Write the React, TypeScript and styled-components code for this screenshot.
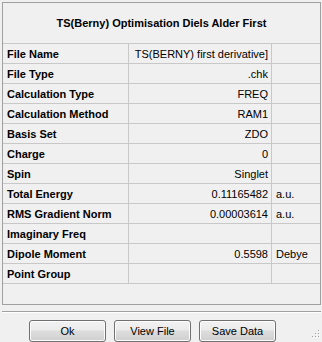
import React from "react";
import styled, { createGlobalStyle } from "styled-components";

const Global = createGlobalStyle`
  html, body { margin: 0; padding: 0; background: #f0f0f0; }
  body { font-family: "Liberation Sans", Arial, sans-serif; font-size: 11px; color: #000; }
`;

const Window = styled.div`
  width: 322px;
  height: 342px;
  box-sizing: border-box;
  padding: 2px 1px 0 2px;
  display: flex;
  flex-direction: column;
  position: relative;
`;

const Panel = styled.div`
  height: 303px;
  box-sizing: border-box;
  border: 1px solid #a0a0a0;
  display: flex;
  flex-direction: column;
`;

const Title = styled.div`
  height: 40px;
  display: flex;
  align-items: center;
  justify-content: center;
  font-weight: bold;
  font-size: 11px;
  border-bottom: 1px solid #c8c8c8;
`;

const Grid = styled.div`
  display: grid;
  grid-template-columns: 126px 143px 1fr;
`;

const Cell = styled.div<{ $align?: "left" | "right"; $bold?: boolean; $last?: boolean }>`
  height: 19px;
  border-bottom: 1px solid #c8c8c8;
  border-right: ${(p) => (p.$last ? "none" : "1px solid #c8c8c8")};
  display: flex;
  align-items: center;
  justify-content: ${(p) => (p.$align === "right" ? "flex-end" : "flex-start")};
  padding: ${(p) => (p.$align === "right" ? "0 3px 0 0" : "0 0 0 4px")};
  font-weight: ${(p) => (p.$bold ? "bold" : "normal")};
  white-space: nowrap;
  overflow: hidden;
`;

const Separator = styled.div`
  margin-top: 6px;
  height: 1px;
  background: #a0a0a0;
  border-bottom: 1px solid #ffffff;
`;

const ButtonRow = styled.div`
  display: flex;
  gap: 8px;
  padding: 7px 0 0 27px;
`;

const Button = styled.button`
  width: 77px;
  height: 22px;
  box-sizing: border-box;
  border: 1px solid #707070;
  border-radius: 3px;
  background: linear-gradient(#f2f2f2 0%, #ebebeb 45%, #dddddd 50%, #cfcfcf 100%);
  box-shadow: inset 0 0 0 1px #fcfcfc;
  font-family: "Liberation Sans", Arial, sans-serif;
  font-size: 11px;
  color: #000;
  padding: 0;
`;

const Grip = styled.svg`
  position: absolute;
  right: 2px;
  bottom: 2px;
`;

const rows: [string, string, string][] = [
  ["File Name", "TS(BERNY) first derivative]", ""],
  ["File Type", ".chk", ""],
  ["Calculation Type", "FREQ", ""],
  ["Calculation Method", "RAM1", ""],
  ["Basis Set", "ZDO", ""],
  ["Charge", "0", ""],
  ["Spin", "Singlet", ""],
  ["Total Energy", "0.11165482", "a.u."],
  ["RMS Gradient Norm", "0.00003614", "a.u."],
  ["Imaginary Freq", "", ""],
  ["Dipole Moment", "0.5598", "Debye"],
  ["Point Group", "", ""],
];

export default function App() {
  return (
    <>
      <Global />
      <Window>
        <Panel>
          <Title>TS(Berny) Optimisation Diels Alder First</Title>
          <Grid>
            {rows.map(([k, v, u]) => (
              <React.Fragment key={k}>
                <Cell $bold>{k}</Cell>
                <Cell $align="right">{v}</Cell>
                <Cell $last>{u}</Cell>
              </React.Fragment>
            ))}
          </Grid>
        </Panel>
        <Separator />
        <ButtonRow>
          <Button>Ok</Button>
          <Button>View File</Button>
          <Button>Save Data</Button>
        </ButtonRow>
        <Grip width="10" height="10" viewBox="0 0 10 10">
          {[
            [8, 0], [8, 3], [5, 3], [8, 6], [5, 6], [2, 6],
          ].map(([x, y], i) => (
            <g key={i}>
              <rect x={x + 1} y={y + 1} width="1" height="1" fill="#ffffff" />
              <rect x={x} y={y} width="1" height="1" fill="#a0a0a0" />
            </g>
          ))}
        </Grip>
      </Window>
    </>
  );
}
